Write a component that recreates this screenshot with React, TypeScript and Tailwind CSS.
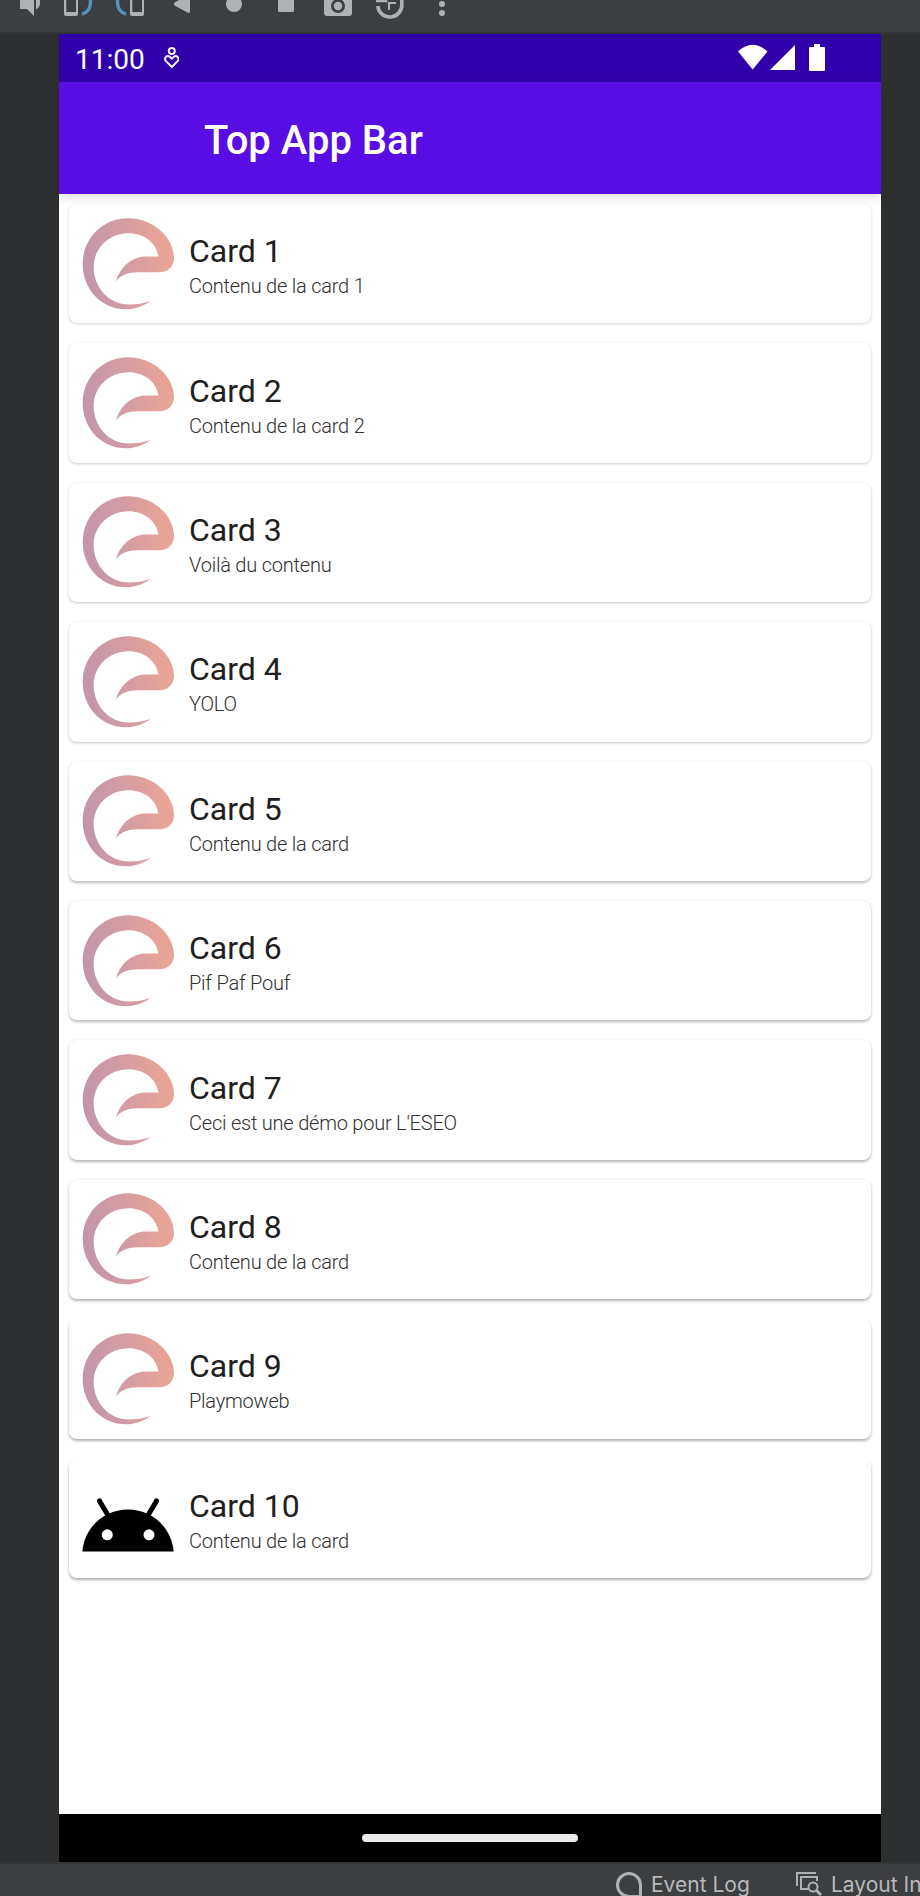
import React from "react";

const toolbarIcons: React.ReactNode[] = [
  <>
    <path d="M20 -2H34V16L27 9H20Z" />
    <path d="M36 0V9.500Q40 7.500 40 3V0Z" />
  </>,
  <>
    <path fillRule="evenodd" d="M12 -4H26V14Q26 16 24 16H14Q12 16 12 14ZM14.300 -4V12H24V-4Z" />
    <path d="M38.300 0Q39.500 11.500 30 14" fill="none" stroke="#5193c4" strokeWidth="3.400" />
  </>,
  <>
    <path fillRule="evenodd" d="M26 -4H40V14Q40 16 38 16H28Q26 16 26 14ZM28.300 -4V12H38V-4Z" />
    <path d="M13.700 0Q12.500 11.500 22 14" fill="none" stroke="#5193c4" strokeWidth="3.400" />
  </>,
  <path d="M18.500 2.500L32 -5Q34 -5 34 -3V11Q34 13.500 32 12.700L18.500 5.500Q17.500 4 18.500 2.500Z" />,
  <circle cx="26" cy="4" r="8" />,
  <rect x="18" y="-4" width="16" height="16" rx="1.500" />,
  <>
    <rect x="12" y="-5" width="28" height="21" rx="3" />
    <circle cx="26" cy="6" r="7" fill="#3c3e40" />
    <circle cx="26" cy="6" r="4.200" />
  </>,
  <>
    <path d="M13.800 6A12 12 0 0 0 37.800 4V-2" fill="none" stroke="#afb1b3" strokeWidth="3.600" />
    <path d="M12 0H23L24 2.300H12Z" />
    <path d="M24 2H32V4H26V10H24Z" />
  </>,
  <>
    <circle cx="26" cy="4" r="3" />
    <circle cx="26" cy="13" r="3" />
  </>,
];

const cards = [
  { text: "Contenu de la card 1", shadow: "shadow-[0_1px_3px_rgba(0,0,0,0.20)]" },
  { text: "Contenu de la card 2", shadow: "shadow-[0_1px_3px_rgba(0,0,0,0.21)]" },
  { text: "Voilà du contenu", shadow: "shadow-[0_1px_3px_rgba(0,0,0,0.23)]" },
  { text: "YOLO", shadow: "shadow-[0_1px_3px_rgba(0,0,0,0.25)]" },
  { text: "Contenu de la card", shadow: "shadow-[0_1.3px_3px_rgba(0,0,0,0.26)]" },
  { text: "Pif Paf Pouf", shadow: "shadow-[0_1.500px_3px_rgba(0,0,0,0.28)]" },
  { text: "Ceci est une démo pour L'ESEO", shadow: "shadow-[0_1.700px_3px_rgba(0,0,0,0.29)]" },
  { text: "Contenu de la card", shadow: "shadow-[0_1.800px_3px_rgba(0,0,0,0.30)]" },
  { text: "Playmoweb", shadow: "shadow-[0_2px_3px_rgba(0,0,0,0.31)]" },
  { text: "Contenu de la card", shadow: "shadow-[0_2px_3px_rgba(0,0,0,0.32)]" },
];

function EseoLogo() {
  return (
    <svg className="h-[92px] w-[92px] shrink-0" viewBox="0 0 92 92">
      <defs>
        <linearGradient id="eseo" x1="0" y1="0.550" x2="1" y2="0.450">
          <stop offset="0" stopColor="#c294ac" />
          <stop offset="0.500" stopColor="#d59ca3" />
          <stop offset="0.850" stopColor="#e6a398" />
          <stop offset="1" stopColor="#e8a596" />
        </linearGradient>
      </defs>
      <path
        fill="url(#eseo)"
        d="M68.500 83C61 88.500 53 91.300 44 91.300C19 91.300 .7 71 .7 46C.7 20 21 .2 46 .2C72 .2 92 20 92 40C92 48.500 86 54.300 77 54.300H56C46 54.300 38.500 57 34 63.500C38 49 50 38.500 64 38.500H76.500C74 24.500 62 15.300 46.500 15.300C27 15.300 11.700 30 11.700 49C11.700 69 26.500 86.500 47 86.500C55 86.500 61 85.500 68.500 83Z"
      />
    </svg>
  );
}

function AndroidHead() {
  return (
    <svg className="h-[92px] w-[92px] shrink-0" viewBox="0 0 92 92">
      <path d="M.3 79.500C2.500 55.500 22 37.600 46 37.600C70 37.600 89.500 55.500 91.700 79.500Z" />
      <path d="M17.500 29L27 45M74.500 29L65 45" stroke="#000" strokeWidth="5" strokeLinecap="round" />
      <circle cx="25.300" cy="62.800" r="5.500" fill="#fff" />
      <circle cx="67" cy="62.800" r="5.500" fill="#fff" />
    </svg>
  );
}

export default function App() {
  return (
    <div className="flex h-[1896px] w-[920px] flex-col overflow-hidden bg-[#2e2f31] font-['Roboto',sans-serif]">
      <div className="flex h-[34px] shrink-0 border-b-2 border-[#323435] bg-[#3c3e40]">
        {toolbarIcons.map((icon, i) => (
          <svg key={i} className="h-8 w-[52px]" viewBox="0 0 52 32" fill="#afb1b3">
            {icon}
          </svg>
        ))}
      </div>

      <div className="ml-[59px] flex w-[822px] grow flex-col bg-white">
        <div className="flex h-12 shrink-0 items-center bg-[#3000aa] pl-4 text-white">
          <span className="w-[86px] pt-[4px] text-[28px] leading-none">11:00</span>
          <svg className="h-6 w-[18px]" viewBox="0 0 18 24" fill="none" stroke="#f4efff" strokeWidth="2">
            <circle cx="10.800" cy="5" r="3" />
            <path d="M10.800 21L5 15.200C2.500 12 6 8.500 9 11L10.800 12.600L12.600 11C15.600 8.500 19 12 16.600 15.200Z" />
          </svg>
          <svg className="mr-[54px] ml-auto h-12 w-[90px]" viewBox="0 0 90 48" fill="#fff">
            <path d="M1 17.500Q15.500 4 30.500 17.500L15.700 35.500Z" />
            <path d="M33 36L58 11V36Z" />
            <path d="M77 10h6v3h4q1 0 1 1v22q0 1-1 1h-14q-1 0-1-1v-22q0-1 1-1h4z" />
          </svg>
        </div>
        <header className="z-10 flex h-28 shrink-0 items-center bg-[#570de3] pt-[5px] pl-[145px] text-[40px] font-medium text-white shadow-[0_3px_10px_rgba(0,0,0,0.14)]">
          Top App Bar
        </header>

        <main className="flex grow flex-col gap-5 px-[10px] pt-[10px]">
          {cards.map((card, i) => (
            <article
              key={i}
              className={`flex h-[119.400px] shrink-0 items-center gap-[15px] rounded-[8px] bg-white pl-[13px] ${card.shadow}`}
            >
              {i === 9 ? <AndroidHead /> : <EseoLogo />}
              <div className="pt-[7px]">
                <h2 className="text-[32px] leading-[38px] text-[#202020]">Card {i + 1}</h2>
                <p className="text-[20px] leading-[32px] font-light tracking-[-0.22px] text-[#303030]">{card.text}</p>
              </div>
            </article>
          ))}
        </main>

        <div className="flex h-12 shrink-0 items-center justify-center bg-black">
          <div className="h-2 w-[216px] rounded-full bg-[#ebebeb]" />
        </div>
      </div>

      <footer className="flex h-[34px] shrink-0 border-t-2 border-[#323435] bg-[#3c3e40] pl-[616px] font-['Inter',sans-serif] text-[21px] leading-[41px] whitespace-nowrap text-[#b8babc]">
        <svg className="mt-2 mr-[8px] h-6 w-[27px] shrink-0" viewBox="0 0 27 24" fill="none" stroke="#afb1b3" strokeWidth="3">
          <path d="M24.500 13A11.500 11.500 0 1 0 13 24.500H24.500Z" />
        </svg>
        <span className="w-[145px] shrink-0">Event Log</span>
        <svg className="mt-2 mr-[8px] h-6 w-[27px] shrink-0" viewBox="0 0 27 24" fill="none" stroke="#afb1b3" strokeWidth="2">
          <path d="M1 14V1H20M12 17H5V5H21V9" />
          <circle cx="17" cy="15" r="4.500" />
          <path d="M20 18L25 23" strokeWidth="3" />
        </svg>
        <span>Layout In</span>
      </footer>
    </div>
  );
}
